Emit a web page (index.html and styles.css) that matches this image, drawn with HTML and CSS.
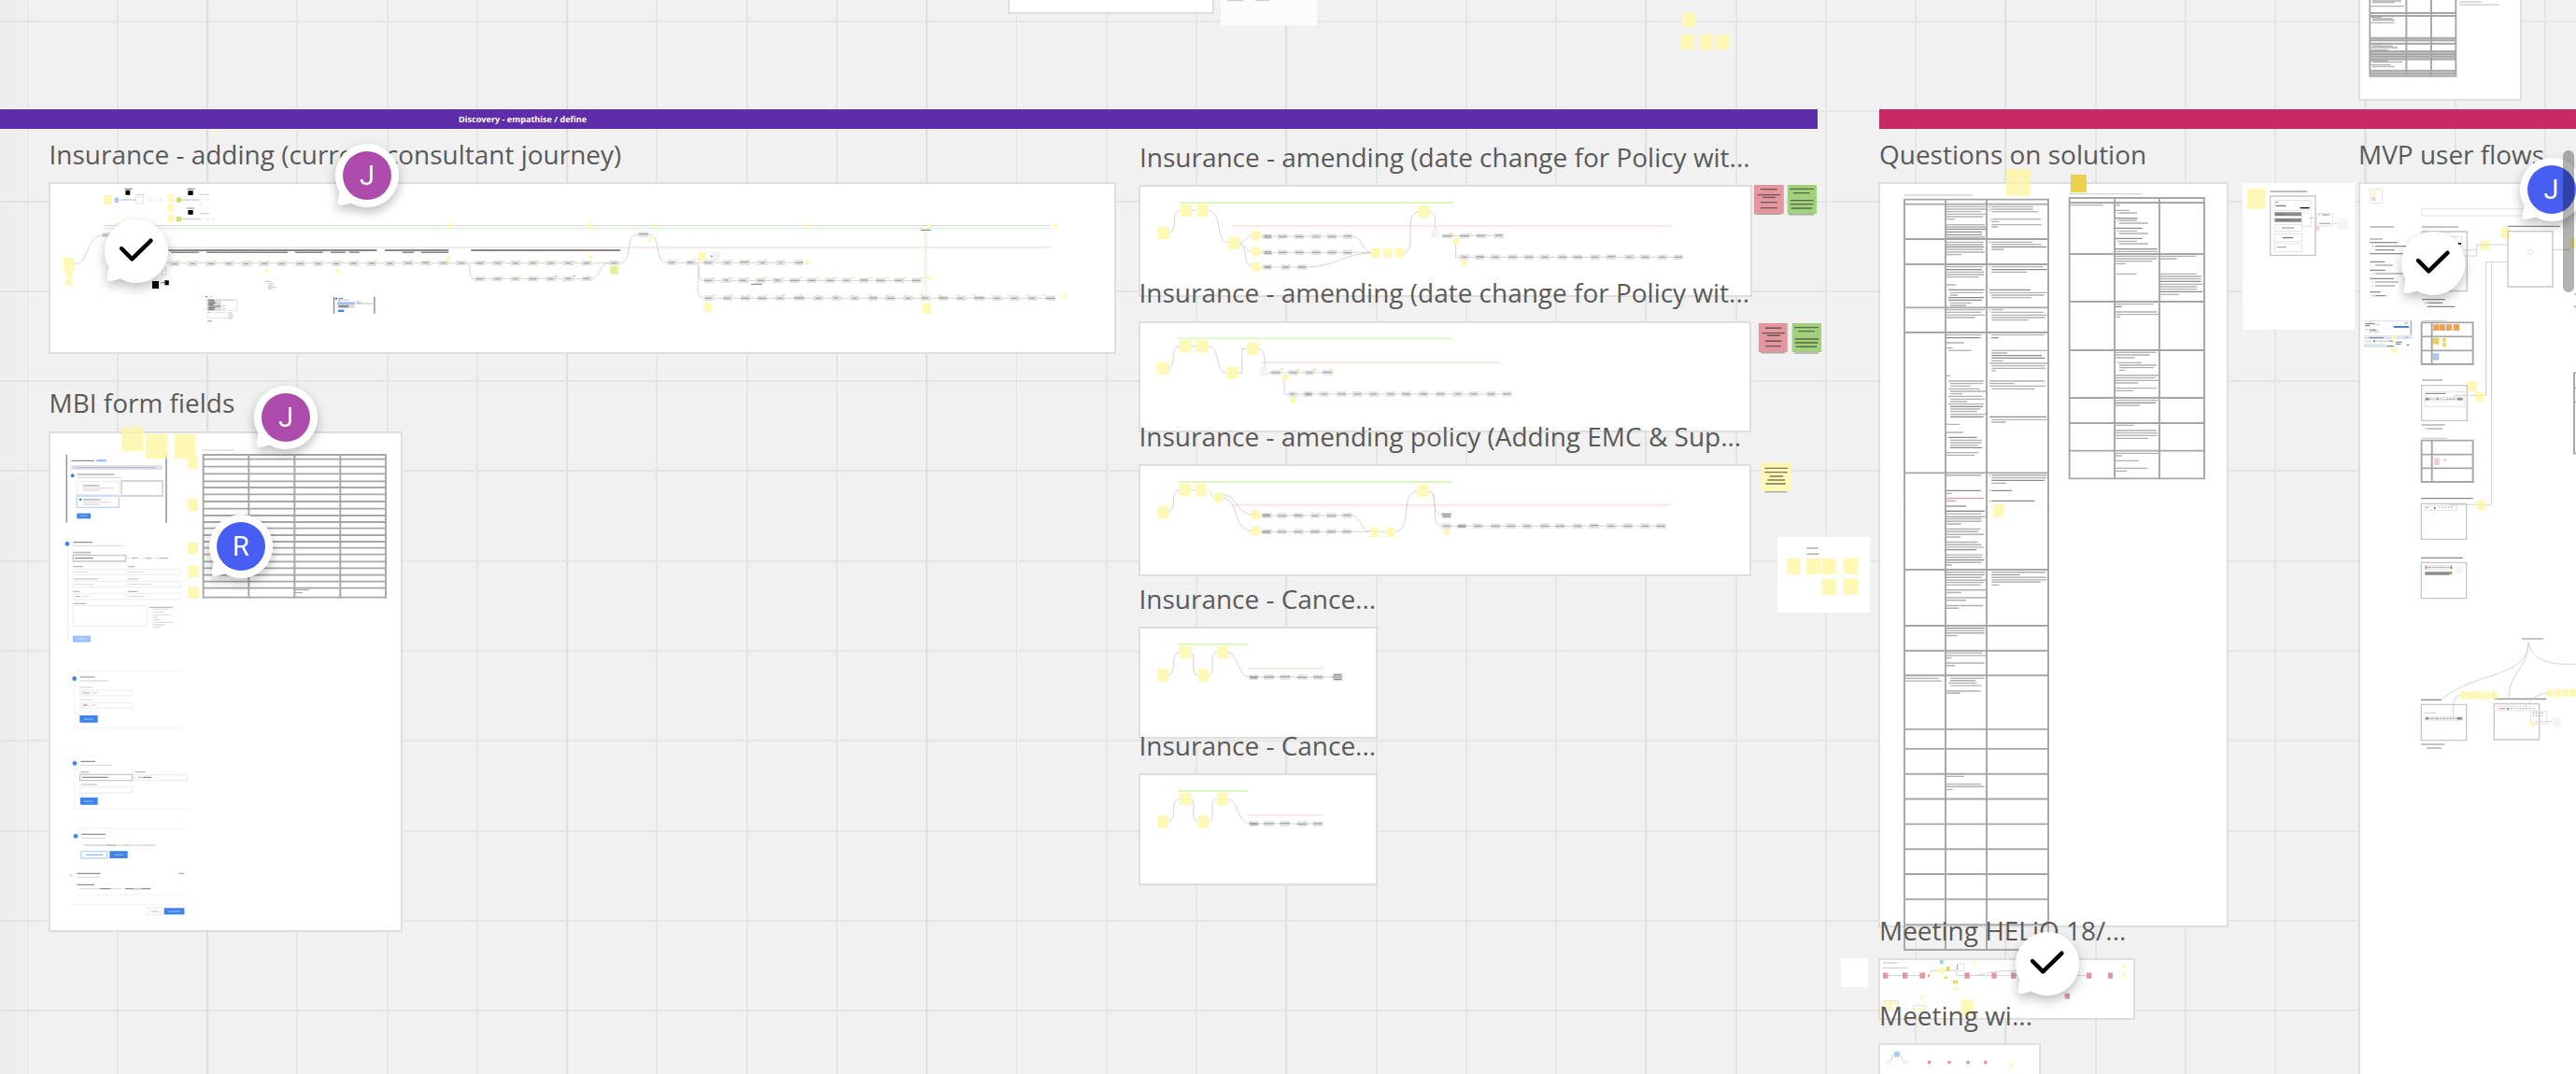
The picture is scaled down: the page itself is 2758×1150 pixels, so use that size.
FILE: index.html
```html
<!DOCTYPE html>
<html lang="en">
<head>
<meta charset="utf-8">
<title>Board</title>
<link rel="stylesheet" href="styles.css">
</head>
<body>
<main class="board">
  <div class="frame f-top-a"></div>
  <div class="card c-top-b"></div>
  <div class="frame f-top-c"></div>
  <div class="banner discovery">Discovery - empathise / define</div>
  <div class="banner solution"></div>
  <div class="frame f-adding"></div>
  <div class="frame f-mbi"></div>
  <div class="frame f-am1"></div>
  <div class="frame f-am2"></div>
  <div class="frame f-am3"></div>
  <div class="frame f-can1"></div>
  <div class="frame f-can2"></div>
  <div class="frame f-questions"></div>
  <div class="frame f-mvp"></div>
  <div class="frame f-helio"></div>
  <div class="frame f-wi"></div>
  <div class="card c-notes"></div>
  <div class="card c-modal"></div>
  <div class="card c-small"></div>

  <svg class="art" width="2758" height="1150" viewBox="0 0 2758 1150">
    <!-- top strip -->
    <path class="y" d="M1801 14h14v15h-14zM1800 37h14v16h-14zM1820 37h13v16h-13zM1838 37h14v16h-14z"/>
    <path class="l3" d="M1314 .5h17M1344 .5h15"/>
    <path class="y" d="M228 139h3v2h-3zM232 141h2v4h-2z"/>

    <!-- adding journey -->
    <path class="axis" d="M111 241.7H1125"/><path class="axis g" d="M111 244.7H1125"/><path class="axis r" d="M180 265H1125"/>
    <g transform="translate(0 100) scale(.4464 .3333)">
      <path class="y" d="M249 327h20v31h-20zM402 324h15v24h-15zM402 357h15v24h-15zM402 391h15v22h-15zM152 528h27v41h-27zM158 569h15v22h-15zM158 596h15v22h-15zM1072 418h9v13h-9zM1412 418h9v13h-9zM1071 520h9v16h-9zM634 564h10v13h-10zM805 564h10v13h-10zM280 417h8v8h-8z"/>
      <path class="blue" d="M275 334h9v17h-9z"/>
      <path class="lime" d="M423 334h12v16h-12zM423 396h12v16h-12z"/>
      <path class="green" d="M1464 555h18v26h-18z"/>
      <path class="black" d="M301 311h11v15h-11zM451 313h12v14h-12zM451 375h12v14h-12zM365 603h16v24h-16zM395 601h10v15h-10z"/>
      <path class="l1" d="M299 307h18M449 307h18M448 369h18M386 608h10"/>
      <path class="l3" d="M326 325h20M478 325h24M478 386h24M284 342h42M436 342h42M436 403h42"/>
      <path class="box faint" d="M326 332h18v22h-18zM388 560h10v24h-10z"/>
      <path class="pale" d="M356 336h9v12h-9zM372 336h7v12h-7zM382 336h7v12h-7zM478 336h8v10h-8zM494 336h8v12h-8zM478 351h8v11h-8zM478 399h8v10h-8zM494 399h8v10h-8zM509 399h7v10h-7z"/>
      <path class="bar" d="M404 504H904M923 504h153M1130 504h358"/>
      <path class="bar thin" d="M410 511h67M495 511h195M708 511h67M793 511h35M838 511h24M965 511h28M1010 511h66"/>
      <path class="wire" d="M400 545H1488M1138 596h280M178 548C215 548 205 457 249 455M1121 545C1133 560 1122 594 1138 596M1418 596C1440 590 1436 548 1460 545M1488 545C1520 540 1496 455 1530 453"/>
      <path class="node" d="M413 547h12M456 547h12M499 547h12M542 547h12M585 547h12M627 547h12M670 547h12M714 547h12M757 547h12M800 547h12M842 547h12M885 547h12M929 547h12M972 545h12M1015 545h12M1058 545h12M1100 545h12M1145 545h12M1187 545h12M1230 545h12M1272 545h12M1315 545h12M1357 545h12M1401 545h12M1467 545h12M1145 596h12M1187 596h12M1230 596h12M1272 596h12M1315 596h12M1357 596h12M1401 596h12M1537 453h12M250 455h8"/>
      <path class="core" d="M413 548h13M457 547h11M499 547h14M543 547h11M585 547h10M627 547h14M670 547h12M712 547h15M757 547h12M800 547h12M842 546h12M885 546h13M929 546h12M972 545h15M1013 544h16M1058 545h12M1100 545h14M1142 545h17M1187 545h12M1230 546h12M1272 545h13M1315 545h12M1357 545h12M1399 545h15M1466 545h14M1142 596h17M1187 596h12M1230 596h12M1270 596h17M1315 596h12M1357 595h12M1399 595h15M1531 452h24M246 455h12"/>
      <path class="tick" d="M425 539H1112" stroke-dasharray="3 16.15"/>
      <path class="tick" d="M1159 539H1418M1159 589H1330" stroke-dasharray="3 16"/>
      <path class="tick violet" d="M1331 588h4v-3M1374 588h5v-4M1411 586v4"/>
      <path class="box faint" d="M497 662h72v35h-72zM497 704h50v18h-50z"/>
      <path class="grey" d="M497 661h33v38h-33z"/>
      <path class="l0" d="M500 664h13M500 669h16M500 674h17M500 679h12M500 684h30M500 689h16M500 694h14"/>
      <path class="l3" d="M503 653h8M534 664h26M533 682h8M533 692h8M500 704h6M549 706h9M549 712h10M549 718h12M549 723h6M635 604h17M643 611h14M643 617h10M643 622h20M643 627h10"/>
      <path class="azure" d="M493 651h4v4h-4zM804 656h5v6h-5z"/><path class="sky" d="M498 729h10v5h-10z"/>
      <path class="rail" d="M801 654v54M898 654v54"/>
      <path class="grey" d="M809 670h42v20h-42z"/><path class="sky" d="M809 671h42v7h-42z"/><path class="azure" d="M811 695h14v7h-14z"/>
      <path class="l1" d="M812 659h10M812 682h24M812 686h24M855 673h12"/><path class="l3" d="M811 663h26M811 667h6M854 667h8M854 675h40"/>
    </g>
    <g transform="translate(600 100) scale(.4146 .3333)">
      <path class="y" d="M73 418h10v13h-10zM240 418h10v13h-10zM632 418h10v13h-10zM947 418h10v13h-10zM1273 418h10v13h-10zM73 519h10v12h-10zM228 461h9v14h-9zM355 509h20v30h-20zM633 536h10v13h-10zM947 586h10v13h-10zM1295 645h10v12h-10zM370 671h21v31h-21zM935 675h22v32h-22z"/>
      <path class="pale" d="M392 509h21v30h-21z"/>
      <path class="l1" d="M931 439h26M492 613h29M388 523h5"/>
      <path class="wire" d="M275 544h350M370 601h560M370 658h905M228 453C262 455 240 540 275 544M346 544C370 548 346 600 370 601M352 545C366 565 340 656 370 658"/>
      <path class="wire mint" d="M945 441V648"/><path class="wire cream" d="M926 650C940 640 942 600 941 441"/>
      <path class="node" d="M282 544h12M330 544h12M378 544h12M424 544h12M470 544h12M516 544h12M562 544h12M609 544h12M378 601h12M422 601h12M467 601h12M511 601h12M555 601h12M599 601h12M643 601h12M690 601h12M733 601h12M778 601h12M821 601h12M869 601h12M914 601h12M378 658h12M426 658h12M472 658h12M515 658h12M562 658h12M611 658h12M660 658h12M707 658h12M754 658h12M801 658h12M846 658h12M892 658h12M937 658h12M983 658h12M1030 658h12M1076 658h12M1122 658h12M1167 658h12M1213 658h12M1259 658h12"/>
      <path class="core" d="M281 544h14M328 543h14M370 544h20M424 544h12M463 542h24M517 544h10M564 544h8M607 544h20M372 601h18M424 600h8M464 601h15M509 601h18M554 600h12M593 601h24M640 601h18M688 601h18M733 601h12M775 600h18M816 601h22M864 601h18M909 601h20M373 658h17M422 658h16M467 658h21M510 658h22M560 658h14M604 657h25M660 658h13M706 657h10M754 658h12M799 657h18M843 658h20M892 658h12M933 657h15M977 657h23M1024 658h16M1068 657h27M1120 658h14M1165 658h14M1210 658h15M1254 658h24"/>
      <path class="tick" d="M300 534H350" stroke-dasharray="3 15"/><path class="tick" d="M392 536H630M392 592H945M392 648H1285" stroke-dasharray="3.4 15.2"/>
    </g>

    <!-- form fields -->
    <g class="form" transform="translate(0 400) scale(.33333)">
      <path class="box" d="M390 345h132v48h-132z"/>
      <path class="rail" d="M214 261v218M534 261v218"/>
      <path class="y glass" d="M391 172h69v77h-69zM468 195h69v78h-69zM560 195h68v78h-68zM602 268h34v39h-34zM602 403h34v39h-34zM602 542h34v37h-34zM604 616h34v38h-34zM604 685h34v38h-34z"/>
      <path class="lilac" d="M227 294h295v15H227z"/>
      <path class="l0" d="M229 280h74M248 324h120M235 542h62M240 593h59M267 360h53M267 405h56"/>
      <path class="l1" d="M247 302h254M236 302h5M309 280h32M235 620h31M411 620h22M235 660h81M411 660h34M235 700h20M411 700h30M243 716h16M235 739h42M235 574h57M423 593h20M468 593h20M511 593h30M480 751h75"/>
      <path class="l3" d="M248 334h142M267 368h101M267 375h56M267 413h88M267 420h54M235 553h160M235 579h57M240 637h42M414 637h48M240 677h60M414 677h72M270 716h17M414 716h48M488 757h51M490 766h35M490 775h57M490 783h14M490 791h28M490 799h65M490 807h40M490 815h26M650 246h102M410 593h8M455 593h8M499 593h8"/>
      <path class="box faint" d="M247 347h136v42h-136zM235 628h169v18h-169zM411 628h168v18h-168zM235 667h169v19h-169zM411 667h168v19h-168zM235 706h169v20h-169zM411 706h168v20h-168zM235 746h237v65h-237zM217 525v335"/>
      <path class="box" d="M235 584h169v19h-169z"/>
      <path class="box bluebox" d="M247 393h135v37h-135z"/>
      <path class="azure" d="M247 449h44v17h-44z"/><circle class="azure" cx="233" cy="328" r="6"/><circle class="azure" cx="216" cy="547" r="7"/><circle class="azure" cx="258" cy="405" r="4"/>
      <path class="sky" d="M234 842h57v21h-57z"/><path class="sky" d="M311 276h30v7h-30z"/>
      <path class="white-l" d="M257 457h24M246 852h32"/>
      <path class="cells" d="M652 261H1240M652 275H1240M652 299H1240M652 322H1240M652 346H1240M652 366H1240M652 388H1240M652 411H1240M652 434H1240M652 456H1240M652 477H1240M652 497H1240M652 519H1240M652 540H1240M652 560H1240M652 581H1240M652 604H1240M652 625H1240M652 647H1240M652 668H1240M652 689H1240M652 719H1240M653 258V722M799 258V722M946 258V722M1093 258V722M1239 258V722"/>
      <path class="l2" d="M948 695h44M948 704h24"/>
    </g>
    <g class="form" transform="translate(0 700) scale(.33333)">
      <path class="box faint" d="M256 117h169v18h-169zM256 158h169v17h-169zM256 428h169v19h-169zM433 389h168v18h-168zM471 817h49v22h-49z"/>
      <path class="wire hair" d="M239 58v180M239 330v170M239 55h345M239 238h345M243 562h355M239 499h364M225 805h368M246 774h346"/>
      <path class="pale" d="M257 118h34v17h-34zM257 158h31v17h-31z"/>
      <path class="l0" d="M257 75h47M259 346h47M262 580h77M247 706h76M247 742h56M264 397h83M459 397h28M267 165h14M320 755h36M402 755h82M338 615h35M395 615h18"/>
      <path class="l1" d="M264 126h24M443 397h14M259 420h54M259 380h25M434 380h33M485 828h24M270 615h66M475 615h24"/>
      <path class="l3" d="M257 87h91M257 108h42M257 148h42M295 126h18M292 165h15M259 358h100M262 592h78M247 718h77M256 755h62M358 755h34M375 615h60"/>
      <path class="l1 redl" d="M436 615h37M428 755h26"/>
      <path class="box" d="M257 388h168v19h-168z"/>
      <path class="box bluebox" d="M261 635h83v22h-83z"/>
      <path class="azure" d="M256 198h58v23h-58zM258 462h56v23h-56zM352 634h58v23h-58zM527 817h65v21h-65z"/>
      <circle class="azure" cx="239" cy="80" r="7"/><circle class="azure" cx="240" cy="352" r="7"/><circle class="azure" cx="243" cy="586" r="7"/><circle class="done" cx="228" cy="712" r="5"/>
      <path class="white-l" d="M270 210h30M270 474h30M368 646h28M541 828h38"/>
      <path class="l1 link" d="M275 646h56M573 706h18"/>
    </g>

    <!-- amending flows 1 and 2 -->
    <g transform="translate(1200 130) scale(.4974 .3333)">
      <path class="axis lg" d="M125 261H716M123 697H714"/><path class="axis r" d="M238 336H1186M304 775H817"/>
      <path class="wire" d="M104 358C124 350 106 290 128 286H165M188 286C222 292 200 385 232 391M256 391C270 388 268 370 282 367M256 391C266 396 270 415 282 419M256 391C274 400 262 464 282 467M300 369H500C524 375 515 416 540 421M300 421H540M300 468H400C460 468 480 424 540 423M609 422C640 415 606 296 641 290M664 291C684 296 674 330 678 350M690 367H824M721 394V436H1210M102 794C122 786 104 726 126 722H163M186 722C220 728 198 802 228 808M252 808H261V730H271M295 730C314 736 308 770 310 790M318 807H455M352 832V876H840"/>
      <path class="y" d="M79 338h25v40h-25zM128 266h25v40h-25zM163 266h25v40h-25zM231 371h25v40h-25zM282 352h18v29h-18zM282 404h18v28h-18zM282 453h18v29h-18zM538 407h19v30h-19zM565 407h19v30h-19zM590 407h19v30h-19zM640 270h24v40h-24zM716 375h13v20h-13zM733 444h12v20h-12zM77 774h25v39h-25zM126 702h25v40h-25zM162 702h25v40h-25zM228 788h24v39h-24zM271 710h25v40h-25zM348 814h12v20h-12zM364 885h12v20h-12z"/>
      <path class="pale" d="M667 346h18v30h-18zM299 789h18v30h-18z"/>
      <path class="node" d="M311 370h10M343 370h10M379 370h10M415 370h10M449 370h10M483 370h10M311 421h10M343 421h10M379 421h10M415 421h10M449 421h10M483 421h10M311 468h10M350 468h10M385 468h10M698 368h10M735 368h10M771 368h10M809 368h10M734 436h10M767 436h10M801 436h10M838 436h10M873 436h10M908 436h10M945 436h10M978 436h10M1016 436h10M1051 436h10M1090 436h10M1124 436h10M1161 436h10M1195 436h10M329 807h10M366 807h10M401 807h10M440 807h10M365 876h10M398 876h10M432 876h10M470 876h10M504 876h10M539 876h10M576 876h10M609 876h10M646 876h10M683 876h10M720 876h10M755 876h10M792 876h10M826 876h10"/>
      <path class="core" d="M309 367h14M309 372h15M340 370h17M376 370h17M414 370h13M446 370h17M480 368h16M309 419h14M309 424h15M340 421h17M376 421h17M412 421h17M446 421h17M480 422h17M309 466h14M309 470h14M348 468h14M382 468h16M692 368h21M730 368h20M766 367h17M806 366h15M734 436h12M765 435h17M799 436h14M835 436h17M870 436h17M906 436h13M943 436h16M974 436h19M1013 436h14M1048 434h16M1088 436h12M1122 436h14M1159 436h13M1192 436h17M323 807h20M362 807h18M400 807h12M435 806h19M364 876h10M397 874h14M397 879h14M432 876h12M467 876h17M502 876h15M537 876h14M574 876h14M606 876h16M645 876h14M680 875h16M720 876h12M753 876h14M790 876h14M823 876h17"/>
      <path class="tick" d="M710 356v8M708 361h8M750 360h5v5M786 365h5M820 365h5M342 794h6v7M378 797h6v6M414 797h6v6M449 797h8"/>
      <path class="drop" d="M1366 298h55M1438 299h54M1378 743h52M1450 744h52"/>
      <path class="rose" d="M1363 204h64v93h-64zM1373 648h62v93h-62z"/><path class="leaf" d="M1435 204h63v93h-63zM1445 648h63v93h-63z"/>
      <path class="ink" d="M1377 218h36M1370 236h49M1381 244h28M1377 260h36M1377 278h36M1440 217h52M1447 230h36M1441 254h50M1441 266h49M1443 279h45M1387 664h35M1380 680h49M1391 688h28M1387 706h35M1387 722h34M1450 662h52M1458 674h36M1451 699h51M1451 711h50M1453 724h45"/>
    </g>

    <!-- amending policy -->
    <g transform="translate(1200 440) scale(.523 .3333)">
      <path class="axis lg" d="M117 228H680"/><path class="axis r" d="M226 302H1126"/>
      <path class="wire" d="M97 325C118 318 98 258 120 253H154M177 253C188 256 182 275 190 278M208 268C240 275 238 330 268 334M208 278C246 290 226 380 268 386M283 336H475C496 345 490 385 511 388M283 388H511M528 388H544M561 388C600 384 568 262 608 258M630 258C652 262 632 325 655 334M630 258C654 265 632 366 655 370H1110"/>
      <path class="y" d="M75 305h22v40h-22zM120 234h23v39h-23zM154 234h22v39h-22zM190 262h18v31h-18zM267 319h17v29h-17zM267 371h17v29h-17zM511 375h17v30h-17zM544 375h17v30h-17zM607 238h23v39h-23zM661 379h12v20h-12zM678 320h3v7h-3z"/>
      <path class="node" d="M294 336h10M325 336h10M359 336h10M393 336h10M426 336h10M458 336h10M294 388h10M325 388h10M359 388h10M393 388h10M426 388h10M458 388h10M662 335h10M662 370h10M693 370h10M726 370h10M762 370h10M794 370h10M827 370h10M863 370h10M894 370h10M930 370h10M964 370h10M999 370h10M1033 370h10M1068 370h10M1101 370h10"/>
      <path class="core" d="M290 333h16M290 338h16M321 337h18M355 336h16M392 337h12M422 337h18M455 335h16M290 386h16M290 391h16M321 388h18M355 388h16M388 388h18M422 388h18M454 388h17M656 331h20M658 336h18M659 341h15M660 370h14M690 368h16M690 372h16M724 370h14M758 370h17M791 370h16M825 370h14M860 370h16M890 370h18M928 370h15M961 368h17M998 370h12M1031 370h15M1067 370h13M1097 370h17"/>
      <path class="drop" d="M1318 260h45"/><path class="y" d="M1312 166h60v92h-60z"/>
      <path class="ink" d="M1318 184h47M1318 197h47M1328 210h28M1324 222h36M1320 234h41"/>
      <path class="y" d="M1363 474h29v51h-29zM1403 474h29v51h-29zM1435 474h30v51h-30zM1479 474h30v51h-30zM1435 540h30v51h-30zM1479 538h30v52h-30z"/>
      <path class="l2" d="M1404 441h24M1404 460h25"/>
    </g>

    <!-- cancellation flows -->
    <g transform="translate(1200 620) scale(.523 .3333)">
      <g id="cancel">
        <path class="axis lg" d="M117 210H260"/><path class="axis r" d="M262 287H414"/>
        <path class="wire" d="M97 310C118 302 98 240 120 235M143 235C158 240 138 305 158 310M180 310C198 302 176 240 197 235M219 235C240 240 240 310 262 315H410"/>
        <path class="y" d="M75 289h22v40h-22zM120 215h23v40h-23zM158 289h22v40h-22zM197 215h22v40h-22z"/>
        <path class="node" d="M267 315h10M298 315h10M331 315h10M367 315h10M399 315h10"/>
        <path class="core" d="M263 314h18M265 318h15M293 315h21M326 314h20M361 316h20M394 315h19"/>
      </g>
      <use href="#cancel" y="471"/>
      <path class="wire" d="M412 315H434"/><path class="grey" d="M434 302h20v26h-20z"/><path class="l1" d="M436 308h16M432 315h21M436 322h16"/>
    </g>

    <!-- questions tables, upper part -->
    <g transform="translate(1980 100) scale(.33333)">
      <path class="cells" d="M175 341H641M175 356H641M175 468H641M175 549H641M175 688H641M175 768H641M175 1219H641M177 338V1350M309 338V1350M441 338V1350M639 338V1350"/>
      <path class="cells" d="M705 336H1143M705 351H1143M705 516H1143M705 669H1143M705 825H1143M705 978H1143M705 1059H1143M705 1148H1143M705 1237H1143M707 334V1239M852 334V1239M996 334V1239M1140 334V1239"/>
      <path class="y glass" d="M504 243h77v86h-77z"/><path class="gold" d="M711 261h51v57h-51z"/>
      <path class="l3" d="M177 327h219M705 323h234"/>
      <path class="l2" d="M312 364h123M312 372h126M312 380h110M312 388h128M312 396h117M312 404h27M312 422h123M312 429h127M312 462h123M312 478h120M312 486h117M312 501h117M312 510h123M312 518h49M312 557h117M312 574h120M312 582h120M312 590h104M312 615h30M324 640h105M324 648h24M324 673h68M324 681h51M312 695h123M312 703h112M312 712h124M312 720h92M312 776h114M312 801h57M312 818h20M318 826h74M312 907h13M318 924h114M324 932h105M324 940h64M318 949h100M324 957h114M324 965h39M318 973h110M324 982h111M324 990h54M318 998h114M324 1014h97M324 1022h86M324 1031h116M312 1063h42M312 1089h54M324 1114h102M324 1122h100M324 1130h90M312 1154h102M312 1162h90M312 1227h112M312 1285h18M312 1326h63"/>
      <path class="l1" d="M312 436h128M312 445h115M312 454h114M312 493h120M312 566h114M318 631h116M318 656h114M318 664h108M312 785h110M324 1006h105M324 1039h107M318 1105h92M324 1138h103M312 1276h110M312 1342h123"/>
      <path class="l2" d="M457 364h134M457 372h133M457 380h148M457 404h158M457 412h24M457 422h160M457 429h20M457 478h132M457 485h160M457 501h40M457 557h166M457 574h114M450 640h185M457 648h169M457 656h128M457 695h37M457 703h167M457 712h178M457 720h172M457 728h118M457 776h169M457 826h178M457 834h50M457 859h38M450 867h186M457 875h172M457 883h174M457 891h13M450 924h177M450 932h80M450 940h180M457 949h138M457 1048h180M457 1056h46M457 1227h177M457 1235h176M457 1252h46"/>
      <path class="l1" d="M457 493h176M457 566h178M450 631h132M457 785h22M457 842h161M457 850h171M450 1039h183M457 1243h170M457 1276h64M457 1309h138M450 364h3M450 373h3M450 405h3M450 478h3M450 558h3M450 696h3M450 1227h3M450 1276h3M450 1309h3"/>
      <path class="l1 redl" d="M312 1301h120M312 1309h30"/>
      <path class="l2" d="M709 359h107M853 359h17M853 376h47M867 384h57M867 408h57M867 417h93M867 442h57M867 450h93M867 475h57M867 483h93M853 508h137M853 523h138M853 531h135M853 539h121M853 547h36M853 580h69M998 523h114M998 531h54M998 580h118M998 588h134M998 596h132M998 613h137M998 621h119M998 629h118M998 646h60M853 677h125M853 702h136M853 710h140M853 718h18M853 832h131M853 840h113M853 849h64M867 865h72M867 873h120M867 881h111M867 889h18M853 906h140M853 914h131M853 922h143M853 930h74M853 947h134M853 955h58M853 986h137M853 1002h80M853 1066h61M853 1083h135M853 1091h138M853 1099h136M853 1108h107M853 1156h142M853 1164h23M853 1180h76M853 1204h105M853 1213h38"/>
      <path class="l1" d="M853 401h73M853 433h88M853 466h88M853 500h136M998 604h132M998 637h137M853 685h22M853 994h131M861 385h3M861 409h3M861 442h3M861 475h3M861 865h3"/>
    </g>
    <g transform="translate(1980 540) scale(.33333 .38906)">
      <path class="cells" d="M175 180H641M175 334H641M175 403H641M175 471H641M175 619H641M175 673H641M175 742H641M175 811H641M175 880H641M175 949H641M175 1018H641M175 1087H641M175 1157H641M175 1226H641M177 0V1228M309 0V1228M441 0V1228M639 0V1228"/>
      <path class="l2" d="M312 5h63M312 26h112M312 34h125M312 40h113M312 47h112M312 54h48M312 68h110M312 75h102M312 83h120M312 90h45M312 104h100M312 111h112M312 118h120M312 139h117M312 146h114M312 160h112M312 167h18M312 187h124M312 201h113M312 209h128M312 215h120M312 222h110M312 236h126M312 243h48M312 257h126M312 264h63M312 279h118M312 286h39M312 348h122M312 354h122M312 361h35M312 409h114M312 416h126M312 423h16M312 437h122M312 444h27M178 479h108M178 486h118M324 479h110M324 485h81M318 492h92M324 499h100M312 514h110M312 520h44M312 749h57M312 770h111M312 777h122M312 785h20M457 187h173M457 201h175M457 208h177M457 214h158M457 222h25"/>
      <path class="l1" d="M312 19h123M312 125h97M312 153h122M312 194h122M312 341h123M457 194h91"/>
      <path class="wire" d="M115 1297H236M263 1290V1284H295M302 1284H345V1297H540M390 1297C440 1297 430 1282 540 1284M730 1297H770"/>
      <path class="rose" d="M108 1289h16v16h-16zM171 1289h16v16h-16zM226 1289h17v16h-17zM370 1289h16v16h-16zM457 1289h16v16h-16zM519 1289h16v16h-16zM762 1289h16v16h-16zM831 1289h15v16h-15zM692 1346h16v15h-16z"/>
      <path class="y" d="M288 1276h15v16h-15zM393 1254h10v12h-10zM333 1329h9v9h-9zM345 1329h9v9h-9zM229 1352h10v10h-10zM357 1364h42v41h-42zM112 1366h12v12h-12zM126 1366h12v12h-12zM141 1366h13v12h-13zM112 1381h12v12h-12zM126 1381h12v12h-12zM207 1384h9v9h-9zM219 1384h9v9h-9zM232 1384h9v9h-9zM875 1266h10v10h-10zM875 1290h10v10h-10z"/>
      <path class="gold" d="M312 1272h10v11h-10zM306 1299h8v7h-8zM333 1311h7v8h-7zM341 1311h7v8h-7z"/><path class="orange" d="M252 1294h6v7h-6z"/><path fill="#86d4f0" d="M291 1254h11v11h-11z"/><path class="rose" d="M345 1266h3v16h-3z"/>
      <path class="box faint" d="M350 1264h18v20h-18zM206 1379h38v19h-38zM108 1366h50v27h-50z"/>
      <path class="l3" d="M108 1262h46M108 1276h78"/>
      <path class="wire" d="M130 1535C140 1534 132 1515 144 1513M161 1513C172 1515 164 1534 178 1535"/>
      <path class="pale" d="M117 1529h15v14h-15zM177 1529h15v14h-15zM177 1384h14v14h-14z"/><path class="blue" d="M145 1506h16v15h-16z"/>
      <path class="rose" d="M251 1531h10v9h-10zM316 1531h10v9h-10zM376 1531h10v9h-10zM432 1531h10v9h-10z"/><path class="y" d="M513 1535h10v9h-10zM513 1545h10v9h-10z"/>
      <path class="y glass" d="M462 0h33v34h-33z"/>
    </g>

    <!-- right column -->
    <g transform="translate(2380 0) scale(.33333)">
      <path class="shade" d="M471 121h279v10H471zM471 138h279v6H471zM471 164h279v28H471zM471 226h279v20H471z"/>
      <path class="cells" d="M471 42H750M471 51H750M471 122H750M471 130H750M471 140H750M471 165H750M471 174H750M471 182H750M471 191H750M471 227H750M471 236H750M471 245H750M472 0V247M589 0V247M669 0V247M748 0V247"/>
      <path class="l2" d="M480 3h93M480 8h72M474 20h108M474 55h37M480 60h66M480 65h72M474 73h77M474 143h36M480 148h66M474 153h87M474 161h56M474 195h56M480 199h96M474 208h65M480 214h72"/>
      <path class="l3" d="M759 6h72M759 15h129"/>
      <path class="y glass" d="M78 606h57v64h-57zM477 613h13v14h-13zM892 733h29v33h-29zM828 773h27v31h-27zM1115 766h19v31h-19z"/>
      <path class="pink" d="M297 726h13v15h-13zM477 632h13v13h-13z"/>
      <path class="box" d="M152 630h145v190h-145z"/>
      <path class="box faint" d="M166 644h117v32h-117zM166 721h88v22h-88zM166 752h88v24h-88zM166 783h88v26h-88zM254 684h29v43h-29zM472 607h40v46h-40zM638 671h330v22H638zM302 685h50v41h-50z"/>
      <path class="dark" d="M166 682h86v12h-86zM166 701h86v12h-86z"/>
      <path class="l0" d="M152 615h118M170 661h32M172 688h28M172 706h42M192 764h33"/><path class="l2" d="M168 650h10M189 732h39M173 794h31M308 690h4M318 690h24M310 718h36"/>
      <path class="black" d="M248 666h30v4h-30zM755 780h10v5h-10z"/><path class="wire" d="M277 700H302M352 719H369"/><path class="pale" d="M369 702h33v36h-33z"/>
      <path class="l1" d="M472 729h77M639 729h117M472 768h40M472 779h89M489 791h100M489 803h62M472 815h117M472 841h47M489 852h57M472 868h50M489 879h92M472 895h77M489 906h74M489 918h63M472 938h35M489 950h34M480 791h3M480 879h3M480 906h3M480 918h3M480 950h3M639 962h75M656 973h49M656 985h89M649 973h3M915 727h168"/>
      <path class="box" d="M639 744h145v191h-145zM915 743h144v178h-144z"/><path class="box faint" d="M650 760h118v32h-118z"/>
      <path class="wire" d="M770 803H815V786H914M770 822H815V803M1060 802H1115M845 1270V841H914M863 1270V841"/>
      <circle class="spinner" cx="987" cy="810" r="8"/>
      <path class="l1" d="M1128 945h6M1128 985h6"/>
      <path fill="#fdfdff" d="M453 1029h154v87H453z"/><path class="lilac" d="M453 1029h154v4H453zM453 1078h154v11H453z"/><path class="sky" d="M471 1031h6v4h-6zM582 1082h14v4h-14z"/><path class="azure" d="M548 1047h49v6h-49zM484 1093h5v6h-5z"/><path class="rail mauve" d="M604 1031v45"/>
      <path class="l1" d="M457 1040h32M457 1046h15M471 1060h23M584 1038h9M470 1085h46M505 1096h8M525 1096h20M555 1099h20M525 1112h24M555 1105h16M590 1108h8"/><path class="l3" d="M491 1043h12M457 1058h10M471 1066h30M457 1096h20M492 1096h45"/><path fill="#d8efcd" d="M453 1103h70v5h-70z"/><path fill="#cfdcf7" d="M453 1109h70v6h-70z"/>
      <path class="y" d="M542 1075h16v16h-16zM541 1119h15v16h-15z"/>
      <path class="cells" d="M636 1036H806M636 1081H806M636 1126H806M636 1170H806M638 1034V1172M671 1034V1172M803 1034V1172"/><path class="l3" d="M638 1031h82"/>
      <path class="orange" d="M676 1042h18v20h-18zM696 1042h18v20h-18zM717 1042h18v20h-18zM740 1042h19v20h-19z"/><path class="gold" d="M675 1086h19v20h-19zM706 1086h10v11h-10zM706 1102h10v11h-10z"/><path class="blue" d="M675 1135h19v22h-19z"/>
    </g>
    <g transform="translate(2380 380) scale(.33333)">
      <path class="l1" d="M639 81h66M639 225h75M655 237h50M648 237h3M636 461h167M636 652h135M960 912h69M636 1108h67M870 1105h168M636 1251h76M654 1263h48M650 124h66"/><path class="l3" d="M639 268h80M648 1150h36"/>
      <path class="box" d="M638 98h146v113H638zM637 478h145v114H637zM637 667h145v115H637zM637 1123h145v115H637zM871 1121h145v115H871z"/>
      <path class="box faint" d="M649 119h126v47H649zM649 484h103v15H649zM883 1129h103v14H883zM989 1144h51v41H989z"/>
      <path class="l3" d="M650 142h120M650 682h86M660 1168h98"/>
      <path class="dark" d="M650 137h12v10h-12zM753 137h18v10h-18zM649 677h5v12h-5zM731 677h5v12h-5zM649 697h87v10h-87zM650 1163h10v10h-10zM752 1163h18v10h-18z"/>
      <path class="box faint" d="M649 137h122v10H649zM649 676h88v13H649zM649 1163h121v10H649z"/>
      <path class="l1 redl" d="M665 142h5M656 683h12M652 490h8M662 1168h16M888 1136h20"/><path class="azure" d="M687 138h4v6h-4zM678 488h5v7h-5zM685 1166h5v5h-5zM913 1134h5v6h-5z"/>
      <path class="l1" stroke-dasharray="1 2.2" d="M720 142h30M676 683h50M694 490h48M700 1168h50M924 1136h50M995 1150h35M997 1159h30M1005 1179h28"/>
      <path class="wire" d="M845 130V130H743V136M845 130V-110M863 -110V481H730V486M982 922C975 1040 830 1010 704 1104M982 922C980 1010 918 1020 919 1100M982 922C990 980 1050 998 1134 993M740 1162C738 1120 740 1096 762 1093M968 1132C990 1110 1005 1090 1041 1087M975 1136H1001V1144M1032 1178H1062"/>
      <path class="y glass" d="M787 84h28v32h-28zM810 119h27v31h-27zM814 467h28v31h-28zM718 684h8v8h-8zM727 703h8v9h-8zM762 1081h20v25h-20zM786 1081h21v25h-21zM811 1081h20v25h-20zM836 1081h20v25h-20zM860 1081h20v25h-20zM986 1177h14v16h-14zM1041 1074h21v25h-21zM1066 1074h20v25h-20zM1091 1074h20v25h-20zM1116 1074h20v25h-20z"/>
      <path class="pale" d="M747 679h21v23h-21zM1062 1164h24v29h-24z"/><path class="pink" d="M678 331h18v23h-18zM708 332h9v10h-9z"/>
      <path class="cells" d="M636 275H806M636 320H806M636 364H806M636 408H806M638 273V410M671 273V410M803 273V410M1128 58H1134M1128 107H1134M1128 151H1134M1128 317H1134M1128 56V319"/>
    </g>
  </svg>

  <h2 class="title t-adding">Insurance - adding (current consultant journey)</h2>
  <h2 class="title t-mbi">MBI form fields</h2>
  <h2 class="title t-am1">Insurance - amending (date change for Policy wit...</h2>
  <h2 class="title t-am2">Insurance - amending (date change for Policy wit...</h2>
  <h2 class="title t-am3">Insurance - amending policy (Adding EMC &amp; Sup...</h2>
  <h2 class="title t-can1">Insurance - Cance...</h2>
  <h2 class="title t-can2">Insurance - Cance...</h2>
  <h2 class="title t-questions">Questions on solution</h2>
  <h2 class="title t-mvp">MVP user flows</h2>
  <h2 class="title t-helio">Meeting HELiO 18/...</h2>
  <h2 class="title t-wi">Meeting wi...</h2>

  <svg width="0" height="0" class="defs">
    <symbol id="bubble" viewBox="-36 -36 72 72"><path fill="#fff" d="M0-34A34 34 0 1 1-17 29.4L-27 32Q-31.5 32.500-31.500 28L-29.500 17A34 34 0 0 1 0-34Z"/></symbol>
    <symbol id="tick" viewBox="-36 -36 72 72"><path fill="none" stroke="#000" stroke-width="4.400" stroke-linecap="round" stroke-linejoin="round" d="M-16-3-4.700 8.400 15.500-11.300"/></symbol>
  </svg>
  <div class="pin p1"><svg class="shape"><use href="#bubble"/></svg><span class="who plum">J</span></div>
  <div class="pin p2"><svg class="shape"><use href="#bubble"/></svg><svg class="mark"><use href="#tick"/></svg></div>
  <div class="pin p3"><svg class="shape"><use href="#bubble"/></svg><span class="who plum">J</span></div>
  <div class="pin p4"><svg class="shape"><use href="#bubble"/></svg><span class="who royal">R</span></div>
  <div class="pin p5"><svg class="shape"><use href="#bubble"/></svg><svg class="mark"><use href="#tick"/></svg></div>
  <div class="pin p6"><svg class="shape"><use href="#bubble"/></svg><svg class="mark"><use href="#tick"/></svg></div>
  <div class="pin p7"><svg class="shape"><use href="#bubble"/></svg><span class="who royal">J</span></div>
  <div class="scroll-thumb"></div>
</main>
</body>
</html>
```
FILE: styles.css
```css
* { box-sizing: border-box; }
body { margin: 0; overflow: hidden; font-family: "Open Sans", "Noto Sans", sans-serif; }

/* canvas with its grid: a stronger vertical rule every fourth line */
.board {
  position: relative;
  width: 2758px;
  height: 1150px;
  overflow: hidden;
  background:
    linear-gradient(90deg, rgba(0,0,0,.015), rgba(0,0,0,0) 50px),
    repeating-linear-gradient(90deg, #dfdfdf 0 1.8px, transparent 1.8px 385.08px) 221.2px 0 / 3000px 100%,
    repeating-linear-gradient(90deg, #e5e5e5 0 1.9px, transparent 1.9px 96.27px) -67.700px 0 / 3000px 100%,
    repeating-linear-gradient(180deg, #e5e5e5 0 2px, transparent 2px 96.27px) 0 -74.200px / 100% 1400px,
    #f1f1f1;
}

.frame, .card, .banner, .title, .pin, .scroll-thumb, .art, .defs { position: absolute; }
.frame { background: #fff; border: 2px solid #dedede; }
.card { background: #fff; }

.f-top-a { left: 1079px; top: -20px; width: 221px; height: 34.500px; }
.c-top-b { left: 1307px; top: 0; width: 103px; height: 27px; background: #fcfcfc; }
.f-top-c { left: 2525px; top: -20px; width: 175px; height: 128px; }
.f-adding { left: 52px; top: 195px; width: 1143px; height: 184px; }
.f-mbi { left: 52px; top: 462px; width: 379px; height: 536px; }
.f-am1 { left: 1219px; top: 198px; width: 657px; height: 120px; }
.f-am2 { left: 1219px; top: 344px; width: 656px; height: 119px; }
.f-am3 { left: 1219px; top: 497px; width: 656px; height: 120px; }
.f-can1 { left: 1219px; top: 671px; width: 256px; height: 120px; }
.f-can2 { left: 1219px; top: 828px; width: 256px; height: 120px; }
.f-questions { left: 2011px; top: 195px; width: 375px; height: 798px; }
.f-mvp { left: 2525px; top: 195px; width: 300px; height: 1000px; }
.f-helio { left: 2011px; top: 1026px; width: 275px; height: 66px; }
.f-wi { left: 2011px; top: 1117px; width: 174px; height: 80px; }
.c-notes { left: 1903px; top: 575px; width: 99px; height: 81px; }
.c-modal { left: 2401px; top: 196px; width: 120px; height: 157px; }
.c-small { left: 1971px; top: 1026px; width: 29px; height: 31px; }

.banner { top: 117px; height: 21px; display: flex; align-items: center; color: #fff; font-size: 9.100px; font-weight: 700; line-height: 1; }
.discovery { left: 0; width: 1946px; padding-left: 491px; background: #5d2daa; white-space: nowrap; }
.solution { left: 2012px; width: 746px; background: #c72a63; }

.title { margin: 0; color: #5a5a5a; font-size: 27.970px; font-weight: 400; line-height: 40px; white-space: nowrap; }
.t-adding { left: 52.500px; top: 145px; }
.t-mbi { left: 52.500px; top: 411px; }
.t-am1 { left: 1220px; top: 148px; }
.t-am2 { left: 1219.500px; top: 293px; }
.t-am3 { left: 1219.500px; top: 446.500px; }
.t-can1 { left: 1219.500px; top: 620.500px; }
.t-can2 { left: 1219.500px; top: 777.500px; }
.t-questions { left: 2012px; top: 145px; }
.t-mvp { left: 2525px; top: 145px; }
.t-helio { left: 2012px; top: 975.500px; }
.t-wi { left: 2012px; top: 1067px; }

/* zoomed-out board objects */
.art { left: 0; top: 0; }
.art path { vector-effect: non-scaling-stroke; stroke-width: 1px; }
.y { fill: #fff9b5; }
.glass { fill: #fff59b; fill-opacity: .75; }
.blue { fill: #a9c8f4; }
.sky { fill: #9cc0f8; }
.azure { fill: #3f83e8; }
.lilac { fill: #dfe3f6; }
.lime { fill: #c9df69; }
.green { fill: #daf494; }
.leaf { fill: #a2d17e; }
.rose { fill: #e3969e; }
.pink { fill: #f5cedc; }
.gold { fill: #eed04c; }
.orange { fill: #f2a058; }
.black { fill: #000; }
.dark { fill: #8a8a8a; }
.grey { fill: #dcdcdc; }
.shade { fill: #c9c9c9; }
.pale { fill: #f3f4f6; }
.done { fill: #cdeec8; }
.spinner { fill: none; stroke: #555; stroke-width: 1.200px; stroke-dasharray: 3 4; }
.wire, .axis, .bar, .node, .core, .tick, .box, .cells, .rail, .ink, .drop, .l0, .l1, .l2, .l3, .white-l { fill: none; }
.art .wire { stroke: #d4d4d4; }
.art .hair { stroke: #f2f2f2; }
.art .mint { stroke: #d8efe3; }
.art .cream { stroke: #f2eed2; }
.art .axis { stroke: #dcdcdc; stroke-width: 1.300px; }
.art .g { stroke: #d6f5d2; }
.art .r { stroke: #fbdfe0; stroke-width: 1.500px; }
.art .lg { stroke: #dcf9c2; stroke-width: 1.800px; }
.art .bar { stroke: #888; stroke-width: 2px; }
.art .thin { stroke-width: 1.500px; }
.art .node { stroke: #e2e2e2; stroke-width: 5.400px; stroke-linecap: square; }
.art .core { stroke: #a6a6a6; stroke-width: 1.300px; }
.art .tick { stroke: #f8dc8e; }
.art .violet { stroke: #a9a5e0; }
.art .box { stroke: #c6c6c6; stroke-width: 1.300px; }
.art .faint { stroke: #e2e2e2; stroke-width: 1px; }
.art .bluebox { stroke: #bfd3f8; }
.art .cells { stroke: #a6a6a6; stroke-width: 1.900px; }
.art .rail { stroke: #8d94a9; stroke-width: 1.500px; }
.art .mauve { stroke: #bca8ad; }
.art .ink { stroke: rgba(40,40,30,.62); stroke-width: 1.400px; }
.art .drop { stroke: rgba(0,0,0,.3); stroke-width: 1.500px; }
.art .l0 { stroke: #777; stroke-width: 1.200px; }
.art .l1 { stroke: #8c8c8c; stroke-width: 1.200px; }
.art .l2 { stroke: #b0b0b0; stroke-width: 1.400px; }
.art .l3 { stroke: #d2d2d2; stroke-width: 1.300px; }
.art .redl { stroke: #e29a9a; }
.art .link { stroke: #8fb4ee; }
.art .white-l { stroke: rgba(255,255,255,.5); }

/* screenshots of the form read paler than board text */
.art .form .l0 { stroke: #8e8e8e; }
.art .form .l1 { stroke: #b9b9b9; }
.art .form .l3 { stroke: #dedede; }
.art .form .faint { stroke: #ebebeb; }
.art .form .redl { stroke: #eebcbc; }
.art .form .link { stroke: #8fb4ee; }

/* comment pins, placed by their centre */
.pin { width: 72px; height: 72px; margin: -36px 0 0 -36px; display: grid; place-items: center; filter: drop-shadow(0 5px 6px rgba(0,0,0,.26)); }
.pin > * { grid-area: 1 / 1; }
.shape, .mark { width: 72px; height: 72px; }
.who { width: 52px; height: 52px; border-radius: 50%; color: #fff; font: 400 29px/52px Roboto, sans-serif; text-align: center; }
.plum { background: #ad4bad; }
.royal { background: #465ef2; }
.p1 { left: 393px; top: 188px; }
.p2 { left: 146px; top: 268.500px; }
.p3 { left: 306px; top: 447px; }
.p4 { left: 258px; top: 584.500px; }
.p5 { left: 2192px; top: 1031.500px; }
.p6 { left: 2605px; top: 281.500px; }
.p7 { left: 2731.500px; top: 203px; }

.scroll-thumb { left: 2744px; top: 161px; width: 12px; height: 152px; border-radius: 6px; background: rgba(0,0,0,.3); }
```
